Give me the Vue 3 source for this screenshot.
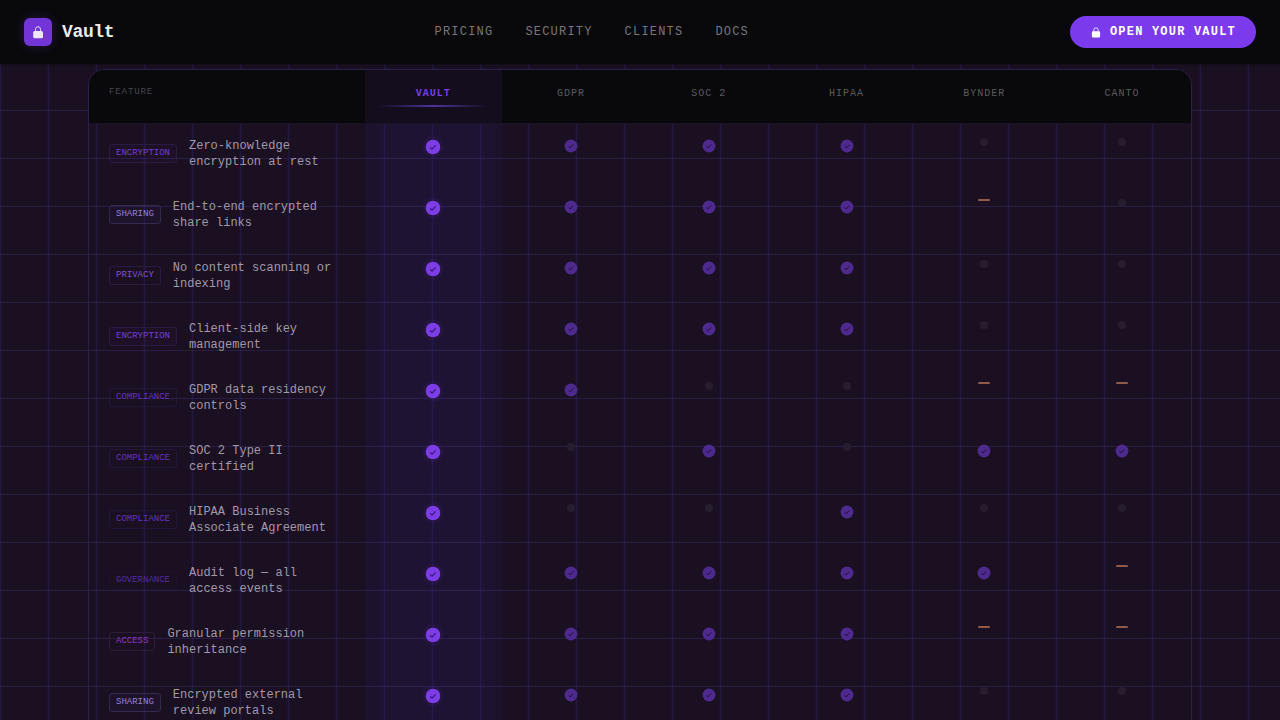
<template>
  <div class="page">
    <header class="nav">
      <div class="brand">
        <span class="logo">
          <svg width="14" height="14" viewBox="0 0 14 14">
            <path d="M4.5 6.5V4.2a2.5 2.5 0 0 1 5 0v2.3" fill="none" stroke="currentColor" stroke-width="0.9" />
            <rect x="2.2" y="6" width="9.8" height="7.2" rx="1.5" fill="currentColor" />
          </svg>
        </span>
        <span class="brand-name">Vault</span>
      </div>
      <nav class="links">
        <a v-for="link in links" :key="link">{{ link }}</a>
      </nav>
      <button class="cta">
        <svg width="12" height="12" viewBox="0 0 12 12">
          <path d="M3.8 5.8V4a2.2 2.2 0 0 1 4.4 0v1.8" fill="none" stroke="currentColor" stroke-width="0.8" />
          <rect x="1.9" y="5.2" width="8.2" height="6.3" rx="1.2" fill="currentColor" />
        </svg>
        <span>OPEN YOUR VAULT</span>
      </button>
    </header>

    <main class="table">
      <div class="row head">
        <div class="head-feature">FEATURE</div>
        <div v-for="(col, i) in columns" :key="col" class="head-cell" :class="{ own: i === 0 }">
          {{ col }}
        </div>
      </div>
      <div v-for="row in rows" :key="row.text" class="row">
        <div class="feature">
          <span class="tag" :class="row.tag.toLowerCase()">{{ row.tag }}</span>
          <span class="label">{{ row.text }}</span>
        </div>
        <div v-for="(mark, i) in row.marks" :key="i" class="cell" :class="{ own: i === 0 }">
          <svg v-if="mark === 'y'" class="check" viewBox="0 0 24 24">
            <circle cx="12" cy="12" r="11" />
            <path d="M7.8 12.6l2.7 2.6 5.4-5.8" />
          </svg>
          <span v-else-if="mark === '-'" class="dash"></span>
          <span v-else class="dot"></span>
        </div>
      </div>
    </main>
  </div>
</template>

<script setup>
const links = ['PRICING', 'SECURITY', 'CLIENTS', 'DOCS'];
const columns = ['VAULT', 'GDPR', 'SOC 2', 'HIPAA', 'BYNDER', 'CANTO'];

// y = supported, - = partial, n = missing
const rows = [
  { tag: 'ENCRYPTION', text: 'Zero-knowledge encryption at rest', marks: 'yyyynn' },
  { tag: 'SHARING', text: 'End-to-end encrypted share links', marks: 'yyyy-n' },
  { tag: 'PRIVACY', text: 'No content scanning or indexing', marks: 'yyyynn' },
  { tag: 'ENCRYPTION', text: 'Client-side key management', marks: 'yyyynn' },
  { tag: 'COMPLIANCE', text: 'GDPR data residency controls', marks: 'yynn--' },
  { tag: 'COMPLIANCE', text: 'SOC 2 Type II certified', marks: 'ynynyy' },
  { tag: 'COMPLIANCE', text: 'HIPAA Business Associate Agreement', marks: 'ynnynn' },
  { tag: 'GOVERNANCE', text: 'Audit log — all access events', marks: 'yyyyy-' },
  { tag: 'ACCESS', text: 'Granular permission inheritance', marks: 'yyyy--' },
  { tag: 'SHARING', text: 'Encrypted external review portals', marks: 'yyyynn' },
].map((row) => ({ ...row, marks: row.marks.split('') }));
</script>

<style>
body {
  margin: 0;
  background: #1b1022;
}
</style>

<style scoped>
.page {
  box-sizing: border-box;
  height: 720px;
  overflow: hidden;
  font-family: 'Liberation Mono', monospace;
  background-color: #1b1022;
  background-image:
    linear-gradient(rgba(78, 62, 150, 0.3) 1px, transparent 1px),
    linear-gradient(90deg, rgba(56, 44, 136, 0.28) 1px, rgba(40, 26, 100, 0.16) 1px, rgba(40, 26, 100, 0.16) 2px, transparent 2px, transparent 47px, rgba(45, 30, 110, 0.1) 47px);
  background-size: 48px 48px;
  background-position: 0 14px;
}

.nav {
  box-sizing: border-box;
  height: 64px;
  padding: 0 24px;
  display: flex;
  align-items: center;
  justify-content: space-between;
  background: #09090b;
  box-shadow: 0 1px 2px rgba(9, 9, 11, 0.5);
}

.brand {
  display: flex;
  align-items: center;
  gap: 10px;
}

.logo {
  width: 28px;
  height: 28px;
  border-radius: 6px;
  display: flex;
  align-items: center;
  justify-content: center;
  background: #7335d8;
  color: #ece6f6;
  box-shadow: 0 0 12px rgba(124, 58, 237, 0.25);
}

.brand-name {
  margin-right: -0.6px;
  font-size: 18px;
  font-weight: 700;
  letter-spacing: -0.36px;
  color: #ebeaee;
}

.links {
  display: flex;
  gap: 32px;
  font-size: 12px;
  letter-spacing: 1.2px;
  color: #77777b;
}

.cta {
  height: 32px;
  padding: 0 20px;
  border: 0;
  border-radius: 16px;
  display: flex;
  align-items: center;
  gap: 8px;
  background: #7c3aed;
  color: #fff;
  font-family: inherit;
  font-size: 12px;
  font-weight: 700;
  letter-spacing: 1.2px;
}

.table {
  margin: 5px 88px 0;
  border: 1px solid #2a2048;
  border-radius: 16px 16px 0 0;
  overflow: hidden;
}

.row {
  display: grid;
  grid-template-columns: 2fr repeat(6, 1fr);
  height: 61px;
}

.head {
  box-sizing: border-box;
  height: 54px;
  background: #09090b;
  border-bottom: 1px solid #1a1226;
}

.head-feature {
  padding: 17px 20px;
  font-size: 9px;
  letter-spacing: 0.9px;
  color: #47474b;
}

.head-cell {
  position: relative;
  padding-top: 18px;
  text-align: center;
  font-size: 10px;
  letter-spacing: 1px;
  color: #5b5b5f;
}

.head-cell.own {
  font-weight: 700;
  color: #7640de;
  background: rgba(132, 50, 220, 0.09);
}

.head-cell.own::after {
  content: '';
  position: absolute;
  left: 10%;
  right: 10%;
  top: 35px;
  height: 2px;
  background: linear-gradient(90deg, transparent, #4f339a, transparent);
}

.feature {
  box-sizing: border-box;
  padding: 0 20px 2px;
  display: flex;
  align-items: center;
  gap: 12px;
}

.tag {
  box-sizing: border-box;
  flex-shrink: 0;
  height: 19px;
  padding: 3px 6px;
  border: 1px solid #291b42;
  border-radius: 3px;
  font-size: 9px;
  line-height: 11px;
  color: #7040d2;
}

.tag.encryption {
  background: rgba(124, 58, 237, 0.03);
}

.tag.sharing {
  color: #9580e0;
  border-color: #35294e;
  background: rgba(139, 92, 246, 0.04);
}

.tag.privacy {
  color: #7b52d2;
}

.tag.compliance {
  color: #6233bc;
  border-color: #23163d;
}

.tag.governance {
  color: #502ca4;
  border-color: #1f122c;
}

.tag.access {
  color: #9036be;
  border-color: #2d1e38;
}

.label {
  font-size: 12px;
  line-height: 16px;
  color: #a199a8;
}

.cell {
  display: flex;
  justify-content: center;
  align-items: flex-start;
  padding-top: 14px;
}

.cell.own {
  background: linear-gradient(90deg, rgba(50, 34, 140, 0.09), rgba(50, 34, 140, 0.16) 20%, rgba(50, 34, 140, 0.16) 80%, rgba(50, 34, 140, 0.09));
}

.check {
  width: 14px;
  height: 14px;
  margin-top: 1px;
}

.check circle {
  fill: #4d2a8e;
}

.check path {
  fill: none;
  stroke: #1d0d3a;
  stroke-width: 1.7;
}

.own .check {
  width: 16px;
  height: 16px;
  border-radius: 50%;
  box-shadow: 0 0 5px rgba(124, 58, 237, 0.25);
}

.own .check circle {
  fill: #7c3ce6;
}

.own .check path {
  stroke: #35157a;
}

.dot {
  width: 8px;
  height: 8px;
  border-radius: 50%;
  background: #271d2f;
}

.dash {
  width: 12px;
  height: 2px;
  border-radius: 1px;
  background: #935a4a;
}
</style>
